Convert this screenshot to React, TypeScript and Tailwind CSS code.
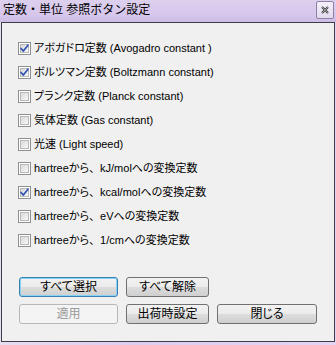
import React from 'react';

const items = [
  { label: 'アボガドロ定数 (Avogadro constant )', checked: true },
  { label: 'ボルツマン定数 (Boltzmann constant)', checked: true },
  { label: 'プランク定数 (Planck constant)', checked: false },
  { label: '気体定数 (Gas constant)', checked: false },
  { label: '光速 (Light speed)', checked: false },
  { label: 'hartreeから、kJ/molへの変換定数', checked: false },
  { label: 'hartreeから、kcal/molへの変換定数', checked: true },
  { label: 'hartreeから、eVへの変換定数', checked: false },
  { label: 'hartreeから、1/cmへの変換定数', checked: false },
];

const font = "font-['Liberation_Sans','Noto_Sans_CJK_JP',sans-serif] [font-feature-settings:'palt']";

// 、 stays full width like the original UI font
function Label({ text }: { text: string }) {
  const parts = text.split('、');
  return (
    <span className="text-[11px] leading-none text-black whitespace-nowrap">
      {parts.map((p, i) => (
        <React.Fragment key={i}>
          {i > 0 && <span className="[font-feature-settings:normal]">、</span>}
          {p}
        </React.Fragment>
      ))}
    </span>
  );
}

function CheckBox({ checked }: { checked: boolean }) {
  return (
    <svg width="13" height="13" viewBox="0 0 13 13" className="shrink-0">
      <defs>
        <linearGradient id="cbfill" x1="0" y1="0" x2="1" y2="1">
          <stop offset="0" stopColor="#d6d6d6" />
          <stop offset="1" stopColor="#fafafa" />
        </linearGradient>
      </defs>
      <rect x="0.5" y="0.5" width="12" height="12" fill="#fff" stroke="#8e8f8f" />
      <rect x="2.5" y="2.5" width="8" height="8" fill="url(#cbfill)" stroke="#b8b8b8" />
      {checked && (
        <path d="M3 6.5 L5.3 9 L10 3.2" fill="none" stroke="#3454b4" strokeWidth="1.8" strokeLinecap="round" strokeLinejoin="round" />
      )}
    </svg>
  );
}

function Button({ label, w, isDefault, disabled }: { label: string; w: string; isDefault?: boolean; disabled?: boolean }) {
  let cls = 'border-[#707070] bg-[linear-gradient(#f2f2f2_0%,#ebebeb_50%,#dddddd_50%,#cfcfcf_100%)] text-black';
  if (isDefault) cls = 'border-[#3c7fb1] bg-[linear-gradient(#f2f2f2_0%,#ebebeb_50%,#dddddd_50%,#cfcfcf_100%)] text-black shadow-[inset_0_0_0_1px_#86d3f5]';
  if (disabled) cls = 'border-[#b4b8bb] bg-[#f4f4f4] text-[#9a9a9a]';
  return (
    <div className={`${w} h-[20px] rounded-[3px] border flex items-center justify-center text-[12px] leading-none ${cls}`}>
      {label}
    </div>
  );
}

export default function App() {
  return (
    <div className={`w-[336px] h-[345px] overflow-hidden flex flex-col bg-[linear-gradient(90deg,#e6ddf0,#dccdef_40%,#e2d4f2)] ${font}`}>
      <div className="h-[22px] flex items-start justify-between pl-[3px] pr-[2px] bg-[linear-gradient(180deg,#ddd0ee,#d6c6ec_70%,#cdbde6)]">
        <span className="text-[12px] leading-none pt-[4px] text-black [font-feature-settings:normal]">定数・単位 参照ボタン設定</span>
        <div className="mt-[1px] w-[18px] h-[18px] rounded-[2px] border border-[#8f80a6] bg-[linear-gradient(#f4f0f9,#e2daee)] flex items-center justify-center">
          <svg width="8" height="8" viewBox="0 0 8 8">
            <path d="M1 1 L7 7 M7 1 L1 7" stroke="#3a3a3a" strokeWidth="2" />
            <path d="M1 1 L7 7 M7 1 L1 7" stroke="#d8d8d8" strokeWidth="0.6" />
          </svg>
        </div>
      </div>
      <div className="mx-[1px] h-[320px] border border-[#3f3d4a] bg-[#f0f0f0] pl-[16px] pt-[19px]">
        <div className="flex flex-col gap-[11px]">
          {items.map((it) => (
            <div key={it.label} className="h-[13px] flex items-center gap-[3px]">
              <CheckBox checked={it.checked} />
              <Label text={it.label} />
            </div>
          ))}
        </div>
        <div className="mt-[30px] pl-[1px] flex flex-col gap-[7px]">
          <div className="flex gap-[8px]">
            <Button label="すべて選択" w="w-[99px]" isDefault />
            <Button label="すべて解除" w="w-[83px]" />
          </div>
          <div className="flex gap-[8px]">
            <Button label="適用" w="w-[99px]" disabled />
            <Button label="出荷時設定" w="w-[83px]" />
            <Button label="閉じる" w="w-[100px]" />
          </div>
        </div>
      </div>
    </div>
  );
}
